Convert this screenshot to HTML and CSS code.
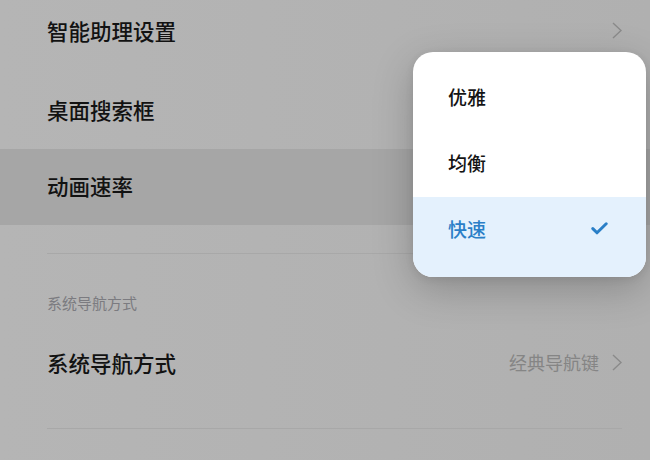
FILE: index.html
```html
<!DOCTYPE html>
<html lang="zh">
<head>
<meta charset="utf-8">
<link rel="stylesheet" href="styles.css">
</head>
<body>
<div class="screen">
  <div class="list">
    <div class="row first">
      <span class="label">智能助理设置</span>
      <svg class="chev" viewBox="0 0 10 17" width="10" height="17"><path d="M1 1 L9 8.5 L1 16" fill="none" stroke="#8a8a8a" stroke-width="1.4"/></svg>
    </div>
    <div class="row">
      <span class="label">桌面搜索框</span>
    </div>
    <div class="row active">
      <span class="label">动画速率</span>
    </div>
    <div class="divider gap1"></div>
    <div class="section">系统导航方式</div>
    <div class="row">
      <span class="label">系统导航方式</span>
      <span class="value">经典导航键</span>
      <svg class="chev" viewBox="0 0 10 17" width="10" height="17"><path d="M1 1 L9 8.5 L1 16" fill="none" stroke="#8a8a8a" stroke-width="1.4"/></svg>
    </div>
    <div class="divider gap2"></div>
  </div>

  <div class="popup">
    <div class="opt">优雅</div>
    <div class="opt">均衡</div>
    <div class="opt selected">
      <span>快速</span>
      <svg class="check" viewBox="0 0 17 13" width="17" height="13"><path d="M1.8 6.6 L6 10.8 L15.2 1.8" fill="none" stroke="#2a7fc7" stroke-width="3" stroke-linecap="round" stroke-linejoin="round"/></svg>
    </div>
  </div>
</div>
</body>
</html>
```

FILE: styles.css
```css
* { box-sizing: border-box; }
html, body {
  margin: 0;
  padding: 0;
}
body {
  width: 650px;
  height: 460px;
  overflow: hidden;
  background: #b3b3b3;
  font-family: "Noto Sans CJK SC", "Noto Sans", sans-serif;
}
.screen {
  position: relative;
  width: 650px;
  height: 460px;
  overflow: hidden;
  background: linear-gradient(90deg, #b5b5b5 0%, #b2b2b2 60%, #b0b0b0 100%);
}
.list {
  display: flex;
  flex-direction: column;
  margin-top: -3px;
}
.row {
  height: 76px;
  display: flex;
  align-items: center;
  padding: 0 28px 4px 47px;
}
.row.first {
  padding-bottom: 10px;
}
.row.active {
  background: #a6a6a6;
}
.label {
  font-size: 21.5px;
  font-weight: 500;
  color: #121212;
  flex: 1;
}
.value {
  font-size: 18px;
  color: #858585;
  margin-right: 13px;
}
.chev {
  display: block;
  flex: none;
}
.divider {
  height: 1px;
  background: #a8a8a8;
  margin-left: 47px;
  margin-right: 28px;
}
.gap1 { margin-top: 28px; }
.gap2 { margin-top: 26px; }
.section {
  font-size: 15px;
  line-height: 20px;
  color: #7b7b80;
  padding-left: 47px;
  margin-top: 39px;
  margin-bottom: 13px;
}
.popup {
  position: absolute;
  left: 413px;
  top: 52px;
  width: 233px;
  height: 225px;
  background: #ffffff;
  border-radius: 20px;
  overflow: hidden;
  padding-top: 13px;
  display: flex;
  flex-direction: column;
  box-shadow: 0 12px 40px rgba(0, 0, 0, 0.22), 0 2px 8px rgba(0, 0, 0, 0.08);
}
.opt {
  height: 66px;
  display: flex;
  align-items: center;
  justify-content: space-between;
  padding: 0 38px 4px 35px;
  font-size: 19px;
  font-weight: 500;
  color: #141414;
}
.opt.selected {
  height: 80px;
  padding-bottom: 18px;
  background: #e4f1fd;
  color: #2a7fc7;
}
.check { display: block; }
```
